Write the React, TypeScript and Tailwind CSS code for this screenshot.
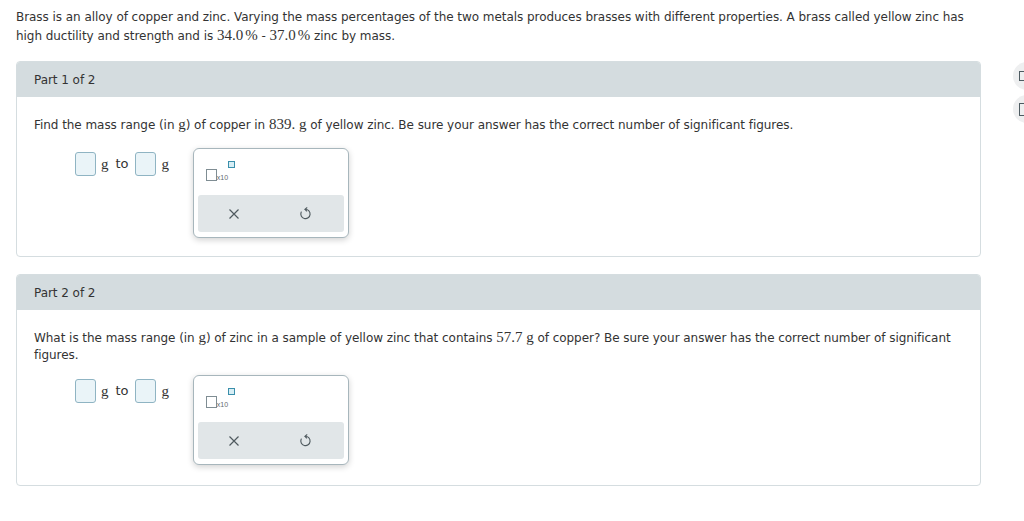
/**
 * Brass problem — two-part question with answer boxes and keypad popups.
 */

import type { ReactNode } from 'react'

const FONT = "font-['DejaVu_Sans',Verdana,sans-serif]"
const SERIF = "font-['Liberation_Serif','Times_New_Roman',serif]"

// --- Small pieces ---

function Num({ children }: { children: ReactNode }) {
  return <span className={`${SERIF} text-[15px] tracking-normal`}>{children}</span>
}

function Pct({ value }: { value: string }) {
  return (
    <span className={`${SERIF} text-[15px] tracking-normal`}>
      {value}
      <span className="ml-[2px]">%</span>
    </span>
  )
}

function AnswerBox() {
  return (
    <span className="inline-block w-[21px] h-[24px] rounded-[3px] border border-[#8fb4c3] bg-[#eaf4f8]" />
  )
}

function RangeInput() {
  return (
    <div className="flex items-center gap-[5px] text-[13px]">
      <AnswerBox />
      <span className={`${SERIF} text-[15px]`}>g</span>
      <span className="ml-[2px] mr-[2px]">to</span>
      <AnswerBox />
      <span className={`${SERIF} text-[15px]`}>g</span>
    </div>
  )
}

function Keypad() {
  return (
    <div className="w-[156px] h-[90px] rounded-[6px] border border-[#a7b6bc] bg-white shadow-[0_2px_6px_rgba(0,0,0,0.18)] px-[4px] pt-[12px]">
      <div className="flex items-end h-[20px] pl-[8px]">
        <span className="inline-block w-[11px] h-[12px] border border-[#7f8d93]" />
        <span className="text-[7px] leading-none text-[#5f6b70] font-['Liberation_Sans',sans-serif] tracking-normal">
          x10
        </span>
        <span className="inline-block w-[7px] h-[7px] border border-[#3a8fab] bg-[#d7eef5] self-start" />
      </div>
      <div className="mt-[14px] h-[37px] rounded-[3px] bg-[#e1e6e8] flex items-center justify-around pr-[2px]">
        <svg viewBox="0 0 12 12" className="w-[12px] h-[12px]" fill="none" stroke="#4f5a5f" strokeWidth={1.2}>
          <path d="M1.5 1.5l9 9M10.5 1.5l-9 9" />
        </svg>
        <svg
          viewBox="0 0 14 14"
          className="w-[13px] h-[13px]"
          fill="none"
          stroke="#4f5a5f"
          strokeWidth={1.2}
          strokeLinecap="round"
          strokeLinejoin="round"
        >
          <path d="M6.5 2.5A5 5 0 1 1 2.4 5.4" />
          <path d="M8.4 0.8L6.5 2.5 8.2 4.3" />
        </svg>
      </div>
    </div>
  )
}

interface PartProps {
  title: string
  question: ReactNode
  bodyHeight: string
  rowGap: string
}

function Part({ title, question, bodyHeight, rowGap }: PartProps) {
  return (
    <section className="rounded-[4px] border border-[#d5dde0] overflow-hidden">
      <div className="h-[35px] bg-[#d4dcdf] flex items-center px-[17px] text-[12px]">
        {title}
      </div>
      <div className={`px-[17px] pt-[19px] ${bodyHeight}`}>
        <p className="text-[12px] leading-[17px]">{question}</p>
        <div className={`flex items-start ${rowGap} pl-[41px]`}>
          <div className="pt-[4px]">
            <RangeInput />
          </div>
          <div className="ml-[24px]">
            <Keypad />
          </div>
        </div>
      </div>
    </section>
  )
}

function SideButton({ variant }: { variant: 'a' | 'b' }) {
  return (
    <div className="w-[32px] h-[28px] rounded-full bg-[#eeeff0] flex items-center pl-[6px]">
      {variant === 'a' ? (
        <span className="inline-block w-[6px] h-[10px] border border-[#4d5b61] border-r-0" />
      ) : (
        <span className="inline-block w-[6px] h-[13px] border border-[#4d5b61] border-r-0 rounded-l-[1px]" />
      )}
    </div>
  )
}

// --- Main component ---

export default function App() {
  return (
    <div
      className={`${FONT} text-[#333] tracking-[-0.05px] w-[1024px] h-[521px] overflow-hidden bg-white flex`}
    >
      <main className="w-[965px] ml-[16px] shrink-0">
        <p className="text-[12px] leading-[18px] pt-[8px]">
          Brass is an alloy of copper and zinc. Varying the mass percentages of the two metals produces
          brasses with different properties. A brass called yellow zinc has high ductility and strength and
          is <Pct value="34.0" /> - <Pct value="37.0" /> zinc by mass.
        </p>

        <div className="mt-[16px] flex flex-col gap-[17px]">
          <Part
            title="Part 1 of 2"
            bodyHeight="h-[159px]"
            rowGap="mt-[14px]"
            question={
              <>
                Find the mass range (in <Num>g</Num>) of copper in <Num>839.</Num> <Num>g</Num> of yellow zinc.
                Be sure your answer has the correct number of significant figures.
              </>
            }
          />
          <Part
            title="Part 2 of 2"
            bodyHeight="h-[175px]"
            rowGap="mt-[11px]"
            question={
              <>
                What is the mass range (in <Num>g</Num>) of zinc in a sample of yellow zinc that contains{' '}
                <Num>57.7</Num> <Num>g</Num> of copper? Be sure your answer has the correct number of
                significant figures.
              </>
            }
          />
        </div>
      </main>
      <aside className="ml-[32px] pt-[62px] flex flex-col gap-[5px] shrink-0">
        <SideButton variant="a" />
        <SideButton variant="b" />
      </aside>
    </div>
  )
}
